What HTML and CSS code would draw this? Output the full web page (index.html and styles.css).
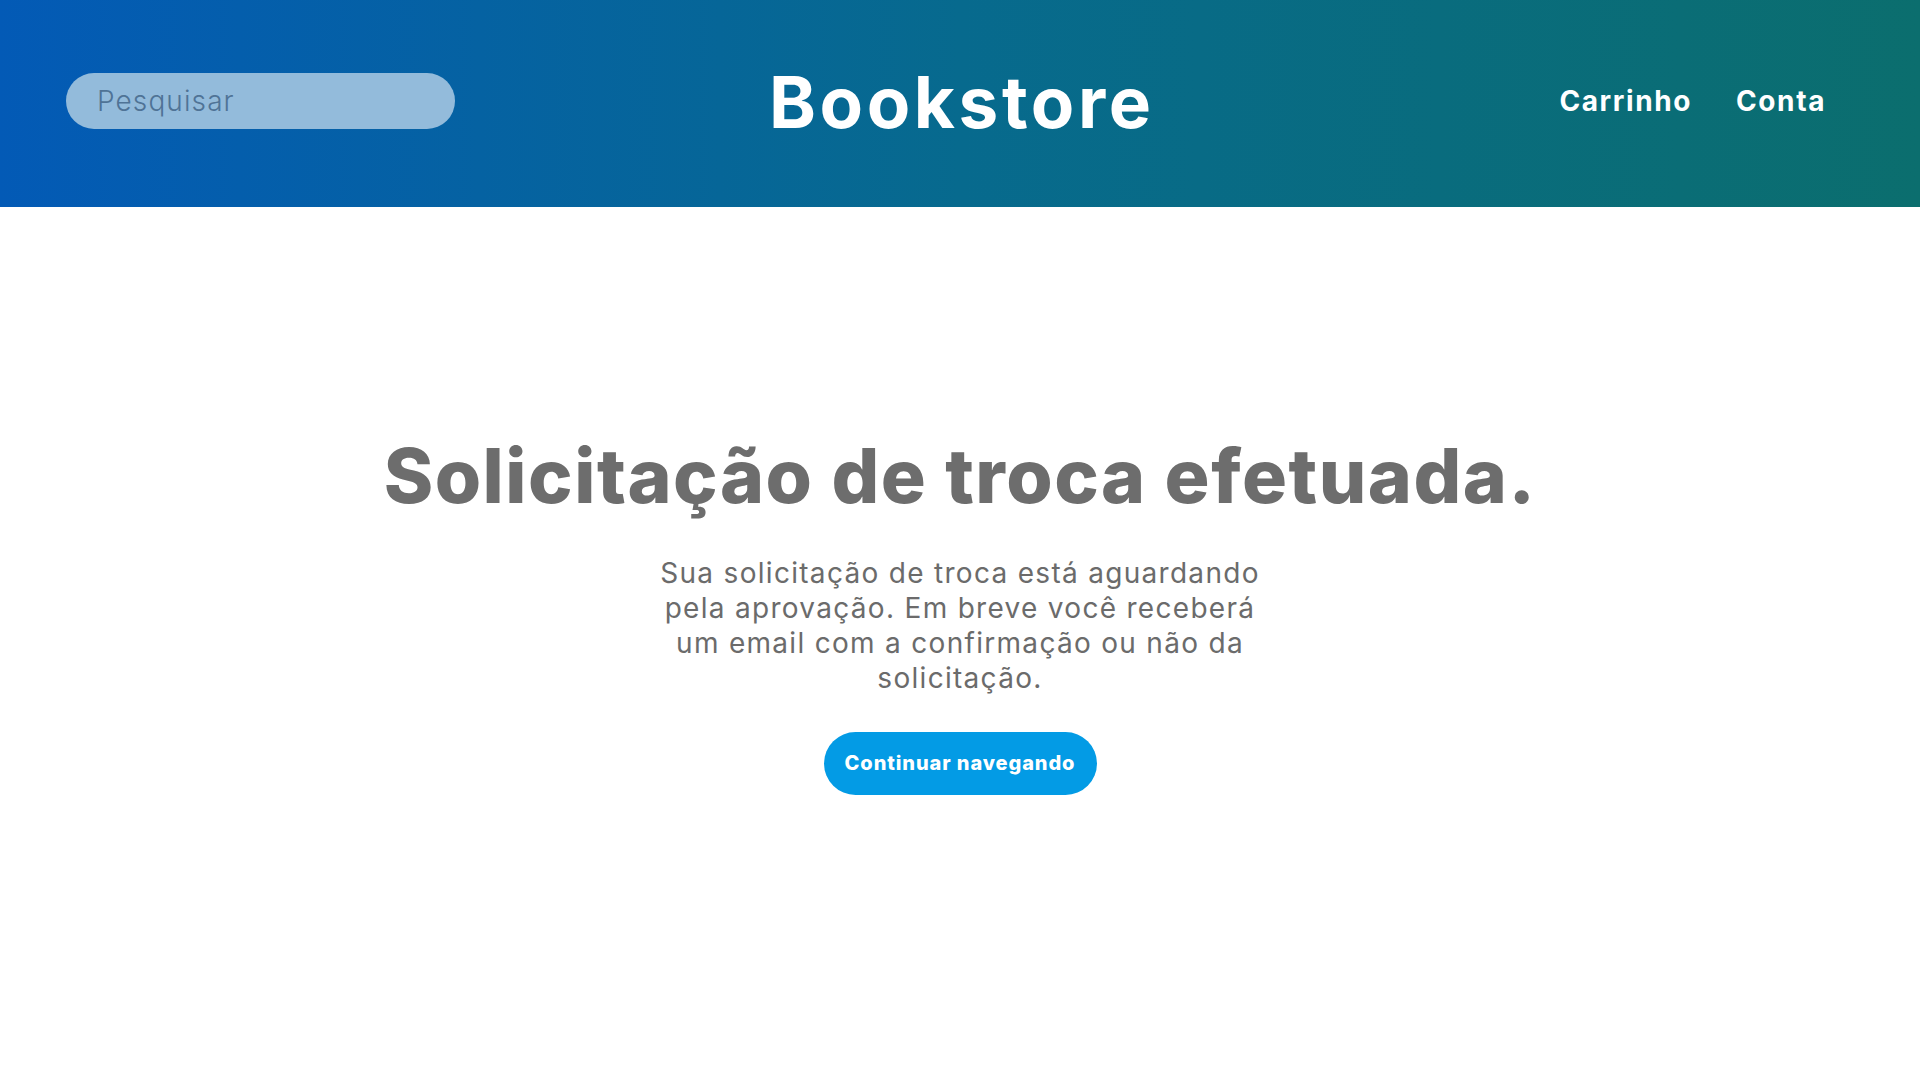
FILE: index.html
```html
<!DOCTYPE html>
<html lang="pt-BR">
<head>
<meta charset="utf-8">
<title>Bookstore</title>
<link rel="stylesheet" href="styles.css">
</head>
<body>
<header class="topbar">
  <div class="search"><span class="search-placeholder">Pesquisar</span></div>
  <h1 class="brand">Bookstore</h1>
  <nav class="nav">
    <a class="nav-link" href="#">Carrinho</a>
    <a class="nav-link" href="#">Conta</a>
  </nav>
</header>
<main class="content">
  <h2 class="title">Solicitação de troca efetuada.</h2>
  <p class="message">Sua solicitação de troca está aguardando pela aprovação. Em breve você receberá um email com a confirmação ou não da solicitação.</p>
  <a class="btn" href="#">Continuar navegando</a>
</main>
</body>
</html>
```
FILE: styles.css
```css
* { box-sizing: border-box; }
html, body { margin: 0; padding: 0; }
body {
  font-family: "Inter", "DejaVu Sans", sans-serif;
  background: #ffffff;
  width: 1920px;
  height: 1080px;
  overflow: hidden;
}
.topbar {
  height: 207px;
  background: linear-gradient(90deg, #035ab6 0%, #076a8e 50%, #0b6e6e 100%);
  display: grid;
  grid-template-columns: 1fr auto 1fr;
  align-items: center;
  padding: 0 66px 5px 66px;
}
.search {
  width: 389px;
  height: 56px;
  border-radius: 28px;
  background: #93bbdb;
  display: flex;
  align-items: center;
  padding-left: 31px;
}
.search-placeholder {
  font-size: 28px;
  font-weight: 300;
  color: #4f7396;
  letter-spacing: 1.1px;
}
.brand {
  margin: 0 -3.6px 0 0;
  color: #ffffff;
  font-size: 71px;
  font-weight: 700;
  letter-spacing: 3.6px;
  line-height: 1;
  padding-top: 2px;
}
.nav {
  justify-self: end;
  display: flex;
  gap: 44px;
  margin-right: 28px;
}
.nav-link {
  color: #ffffff;
  text-decoration: none;
  font-size: 28px;
  font-weight: 700;
  letter-spacing: 1.6px;
}
.content {
  display: flex;
  flex-direction: column;
  align-items: center;
  text-align: center;
  padding-top: 228px;
}
.title {
  margin: 0;
  color: #6d6d6d;
  font-size: 75px;
  font-weight: 800;
  letter-spacing: 1.5px;
  line-height: 1.1;
}
.message {
  margin: 38px 0 0;
  width: 625px;
  color: #6b6b6b;
  font-size: 28px;
  font-weight: 400;
  letter-spacing: 1.3px;
  line-height: 35px;
}
.btn {
  margin-top: 36px;
  width: 273px;
  height: 63px;
  border-radius: 32px;
  background: #039be5;
  color: #ffffff;
  text-decoration: none;
  font-size: 20px;
  font-weight: 800;
  letter-spacing: 0.9px;
  display: flex;
  align-items: center;
  justify-content: center;
}
```
